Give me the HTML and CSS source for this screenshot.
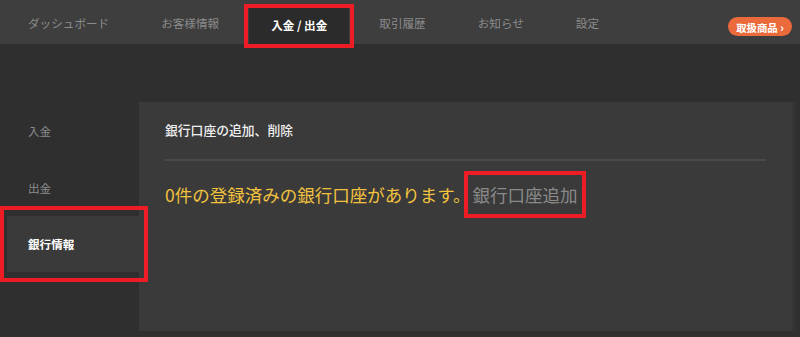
FILE: index.html
```html
<!DOCTYPE html>
<html lang="ja">
  <head>
    <meta charset="UTF-8" />
    <meta name="viewport" content="width=device-width, initial-scale=1.0" />
    <title>銀行情報</title>
    <link rel="stylesheet" href="styles.css">
  </head>
  <body>
    <!-- グローバルナビ -->
    <header class="gnav">
      <nav class="gnav-list">
        <a class="gnav-item" href="#">ダッシュボード</a>
        <a class="gnav-item" href="#">お客様情報</a>
        <a class="gnav-item is-active mark" href="#">入金 / 出金</a>
        <a class="gnav-item" href="#">取引履歴</a>
        <a class="gnav-item" href="#">お知らせ</a>
        <a class="gnav-item" href="#">設定</a>
      </nav>
      <a class="product-btn" href="#">取扱商品 <span class="chev">›</span></a>
    </header>

    <main class="main">
      <!-- サイドメニュー -->
      <aside class="side">
        <a class="side-item" href="#">入金</a>
        <a class="side-item" href="#">出金</a>
        <a class="side-item is-active mark mark-side" href="#">銀行情報</a>
      </aside>

      <section class="panel">
        <h2 class="panel-title">銀行口座の追加、削除</h2>
        <p class="bank-msg">0件の登録済みの銀行口座があります。<a class="bank-add mark mark-link" href="#">銀行口座追加</a></p>
      </section>
    </main>
  </body>
</html>
```

FILE: styles.css
```css
:root {
  --page: #2f2f2f;
  --nav: #3e3e3e;
  --panel: #3a3a3a;
  --muted: #8b8b8b;
  --accent: #ea6a3b;
  --yellow: #f2c23e;
  --mark: #ee1c25;
}

body {
  margin: 0;
  background-color: var(--page);
  color: #eeeeee;
  font-family: "Noto Sans CJK JP", "Noto Sans", sans-serif;
}

a {
  text-decoration: none;
  color: inherit;
}

/* 赤枠の注釈 */
.mark {
  position: relative;
}

.mark::after {
  content: "";
  position: absolute;
  top: -3px;
  right: -5px;
  bottom: -3px;
  left: -5px;
  border: 4px solid var(--mark);
  pointer-events: none;
}

.gnav {
  height: 44px;
  display: flex;
  align-items: center;
  justify-content: space-between;
  background-color: var(--nav);
  padding: 0 8px 0 2px;
}

.gnav-list {
  display: flex;
  height: 100%;
}

.gnav-item {
  display: flex;
  align-items: center;
  padding: 2px 22px 0;
  margin: 0 4px;
  font-size: 11.6px;
  color: var(--muted);
}

.gnav-item.is-active {
  margin: 8px 4px 0;
  padding: 0 22px 2px;
  background-color: #2b2b2b;
  color: #ffffff;
  font-weight: 700;
}

.gnav-item.is-active::after {
  top: -4px;
  right: -5px;
  bottom: -4px;
  left: -5px;
}

.product-btn {
  height: 19px;
  padding: 0 8px;
  border-radius: 10px;
  background-color: var(--accent);
  color: #ffffff;
  font-size: 10.4px;
  font-weight: 700;
  line-height: 19px;
  margin-top: 8px;
}

.chev {
  font-size: 12px;
}

.main {
  display: flex;
  align-items: flex-start;
  padding-top: 58px;
}

.side {
  width: 132px;
  margin-left: 7px;
  display: flex;
  flex-direction: column;
}

.side-item {
  height: 57px;
  display: flex;
  align-items: center;
  padding-left: 21px;
  font-size: 11.6px;
  color: var(--muted);
}

.side-item.is-active {
  height: 56px;
  background-color: var(--panel);
  color: #ffffff;
  font-weight: 700;
}

.mark-side::after {
  top: -10px;
  right: -9px;
  bottom: -10px;
  left: -7px;
}

.panel {
  width: 601px;
  height: 229px;
  padding: 0 26px;
  background-color: var(--panel);
  box-shadow: 3px 0 0 #353535;
}

.panel-title {
  margin: 0;
  padding: 18px 0 19px;
  line-height: 20px;
  font-size: 12.8px;
  font-weight: 500;
  color: #f0f0f0;
  border-bottom: 2px solid #4a4a4a;
}

.bank-msg {
  margin: 22px 0 0;
  line-height: 24px;
  font-size: 17.5px;
  color: var(--yellow);
}

.bank-add {
  margin-left: 2px;
  color: #8a8a8a;
  font-size: 17.5px;
}

.mark-link::after {
  top: -11px;
  right: -9px;
  bottom: -11px;
  left: -8px;
}
```
